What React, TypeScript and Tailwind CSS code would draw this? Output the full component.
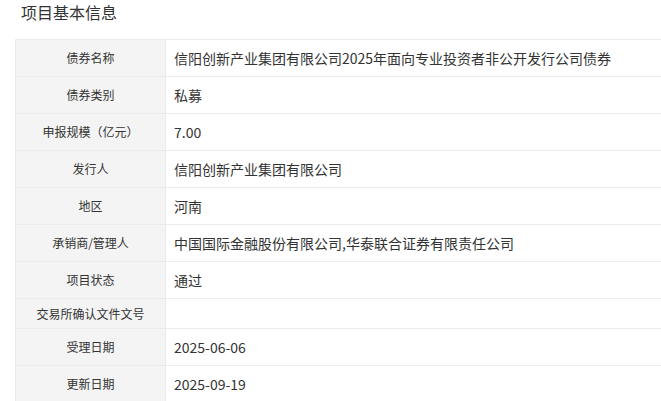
import React from "react";

interface Row {
  label: string;
  value: string;
}

const rows: Row[] = [
  { label: "债券名称", value: "信阳创新产业集团有限公司2025年面向专业投资者非公开发行公司债券" },
  { label: "债券类别", value: "私募" },
  { label: "申报规模（亿元）", value: "7.00" },
  { label: "发行人", value: "信阳创新产业集团有限公司" },
  { label: "地区", value: "河南" },
  { label: "承销商/管理人", value: "中国国际金融股份有限公司,华泰联合证券有限责任公司" },
  { label: "项目状态", value: "通过" },
  { label: "交易所确认文件文号", value: "" },
  { label: "受理日期", value: "2025-06-06" },
  { label: "更新日期", value: "2025-09-19" },
];

const App: React.FC = () => {
  return (
    <div
      className="min-h-screen bg-white text-[#333]"
      style={{ fontFamily: '"Microsoft YaHei", "Noto Sans CJK SC", sans-serif' }}
    >
      <div className="h-[39px] pl-[21px] text-base leading-6 text-[#333]">项目基本信息</div>
      <div className="ml-[15px] border-l border-t border-[#ebebeb]">
        {rows.map((row) => (
          <div
            key={row.label}
            className={`flex border-b border-[#ebebeb] ${row.value ? "h-[37px]" : "h-[30px]"}`}
          >
            <div className="flex w-[150px] shrink-0 items-center justify-center border-r border-[#ebebeb] bg-[#f4f4f4] text-xs">
              {row.label}
            </div>
            <div className="flex items-center whitespace-nowrap px-2 text-sm">{row.value}</div>
          </div>
        ))}
      </div>
    </div>
  );
};

export default App;
